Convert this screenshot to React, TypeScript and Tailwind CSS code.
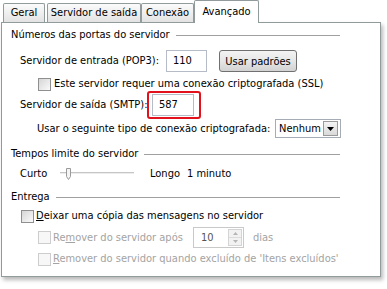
import React from 'react'

const font = { fontFamily: '"DejaVu Sans Condensed", "DejaVu Sans", "Liberation Sans", sans-serif', fontStretch: 'condensed' as const }

function Tab({ label, active = false, w }: { label: string; active?: boolean; w: string }) {
    if (active) {
        return (
            <div className={`${w} h-[23px] -mb-px relative z-10 border border-b-0 border-[#919b9c] rounded-t-[2px] bg-white flex items-start justify-center pt-[4px]`}>
                {label}
            </div>
        )
    }
    return (
        <div className={`${w} h-[19px] border border-b-0 border-[#919b9c] rounded-t-[2px] bg-gradient-to-b from-[#fbfbfb] to-[#e3e3e3] flex items-center justify-center`}>
            {label}
        </div>
    )
}

function Check({ disabled = false }: { disabled?: boolean }) {
    return (
        <span
            className={`w-[13px] h-[13px] shrink-0 border ${
                disabled ? 'border-[#cdcdcd] bg-[#f7f7f7]' : 'border-[#8e8f8f] bg-gradient-to-br from-[#d6d6d6] to-[#fafafa]'
            }`}
        />
    )
}

function Header({ title }: { title: string }) {
    return (
        <div className="flex items-center h-[14px]">
            <span>{title}</span>
            <span className="flex-1 h-px bg-[#a0a0a0] ml-[6px]" />
        </div>
    )
}

export default function App() {
    return (
        <div style={font} className="w-[387px] h-[289px] bg-white text-[11px] leading-[14px] text-black overflow-hidden whitespace-nowrap">
            <div className="flex items-end h-[22px] pl-[3px]">
                <Tab label="Geral" w="w-[42px]" />
                <div className="w-[2px] shrink-0" />
                <Tab label="Servidor de saída" w="w-[94px]" />
                <Tab label="Conexão" w="w-[53px]" />
                <Tab label="Avançado" active w="w-[65px]" />
            </div>

            <div className="ml-[1px] w-[380px] h-[255px] border border-[#919b9c] bg-white shadow-[2px_3px_4px_rgba(0,0,0,0.28)] pt-[5px] pl-[9px] pr-[40px]">
                <Header title="Números das portas do servidor" />

                <div className="flex items-center h-[22px] mt-[8px] pl-[9px]">
                    <span className="w-[146px] shrink-0">Servidor de entrada (POP3):</span>
                    <div className="w-[41px] h-[22px] shrink-0 border border-[#b5bcc7] flex items-center pl-[6px]">110</div>
                    <button className="ml-[12px] w-[78px] h-[22px] shrink-0 rounded-[3px] border border-[#707070] bg-gradient-to-b from-[#f3f3f3] via-[#e6e6e6] to-[#d2d2d2] leading-none">
                        Usar padrões
                    </button>
                </div>

                <div className="flex items-center gap-[3px] h-[14px] mt-[5px] pl-[27px]">
                    <Check />
                    <span>Este servidor requer uma conexão criptografada (SSL)</span>
                </div>

                <div className="flex items-center h-[22px] mt-[3px] pl-[9px]">
                    <span className="w-[132px] shrink-0">Servidor de saída (SMTP):</span>
                    <div className="relative w-[42px] h-[22px] shrink-0 border border-[#b5bcc7] flex items-center pl-[6px]">
                        587
                        <span className="absolute -left-[6px] -top-[4px] w-[54px] h-[28px] border-2 border-[#e2111b] rounded-[3px]" />
                    </div>
                </div>

                <div className="flex items-center h-[19px] mt-[3px] pl-[26px]">
                    <span className="w-[238px] shrink-0">Usar o seguinte tipo de conexão criptografada:</span>
                    <div className="w-[66px] h-[19px] shrink-0 border border-[#a5acb5] flex items-center pl-[3px] pr-[2px]">
                        <span className="flex-1">Nenhum</span>
                        <span className="w-[15px] h-[15px] border border-[#9a9a9a] bg-gradient-to-b from-[#f4f4f4] to-[#d9d9d9] flex items-center justify-center">
                            <svg width="7" height="4" viewBox="0 0 7 4"><path d="M0 0h7L3.5 4z" fill="#000" /></svg>
                        </span>
                    </div>
                </div>

                <div className="mt-[9px]">
                    <Header title="Tempos limite do servidor" />
                </div>

                <div className="flex items-center h-[14px] mt-[6px] pl-[9px]">
                    <span className="w-[40px] shrink-0">Curto</span>
                    <svg width="74" height="12" viewBox="0 0 74 12" className="shrink-0">
                        <line x1="0" y1="4.5" x2="74" y2="4.5" stroke="#c6c6c6" />
                        <line x1="0" y1="5.5" x2="74" y2="5.5" stroke="#ececec" />
                        <path d="M6.5 0.5h4v8l-2 3l-2-3z" fill="#f4f4f4" stroke="#9a9a9a" />
                    </svg>
                    <span className="ml-[16px] w-[37px] shrink-0">Longo</span>
                    <span>1 minuto</span>
                </div>

                <div className="mt-[9px]">
                    <Header title="Entrega" />
                </div>

                <div className="flex items-center gap-[2px] h-[14px] mt-[5px] pl-[10px]">
                    <Check />
                    <span>
                        <span className="underline">D</span>eixar uma cópia das mensagens no servidor
                    </span>
                </div>

                <div className="flex items-center h-[21px] mt-[4px] pl-[27px] text-[#a3a3a3]">
                    <Check disabled />
                    <span className="ml-[2px] w-[140px] shrink-0">
                        Re<span className="underline">m</span>over do servidor após
                    </span>
                    <div className="w-[51px] h-[21px] shrink-0 border border-[#c9c9c9] flex items-center pl-[7px] pr-[1px]">
                        <span className="flex-1 text-[#555]">10</span>
                        <span className="flex flex-col w-[14px] h-[17px] border border-[#d4d4d4]">
                            <span className="flex-1 bg-[#f2f2f2] border-b border-[#dcdcdc] flex items-center justify-center">
                                <svg width="5" height="3" viewBox="0 0 5 3"><path d="M0 3h5L2.5 0z" fill="#b5b5b5" /></svg>
                            </span>
                            <span className="flex-1 bg-[#f2f2f2] flex items-center justify-center">
                                <svg width="5" height="3" viewBox="0 0 5 3"><path d="M0 0h5L2.5 3z" fill="#b5b5b5" /></svg>
                            </span>
                        </span>
                    </div>
                    <span className="ml-[9px]">dias</span>
                </div>

                <div className="flex items-center gap-[2px] h-[14px] mt-[4px] pl-[27px] text-[#a3a3a3]">
                    <Check disabled />
                    <span>
                        <span className="underline">R</span>emover do servidor quando excluído de 'Itens excluídos'
                    </span>
                </div>
            </div>
        </div>
    )
}
